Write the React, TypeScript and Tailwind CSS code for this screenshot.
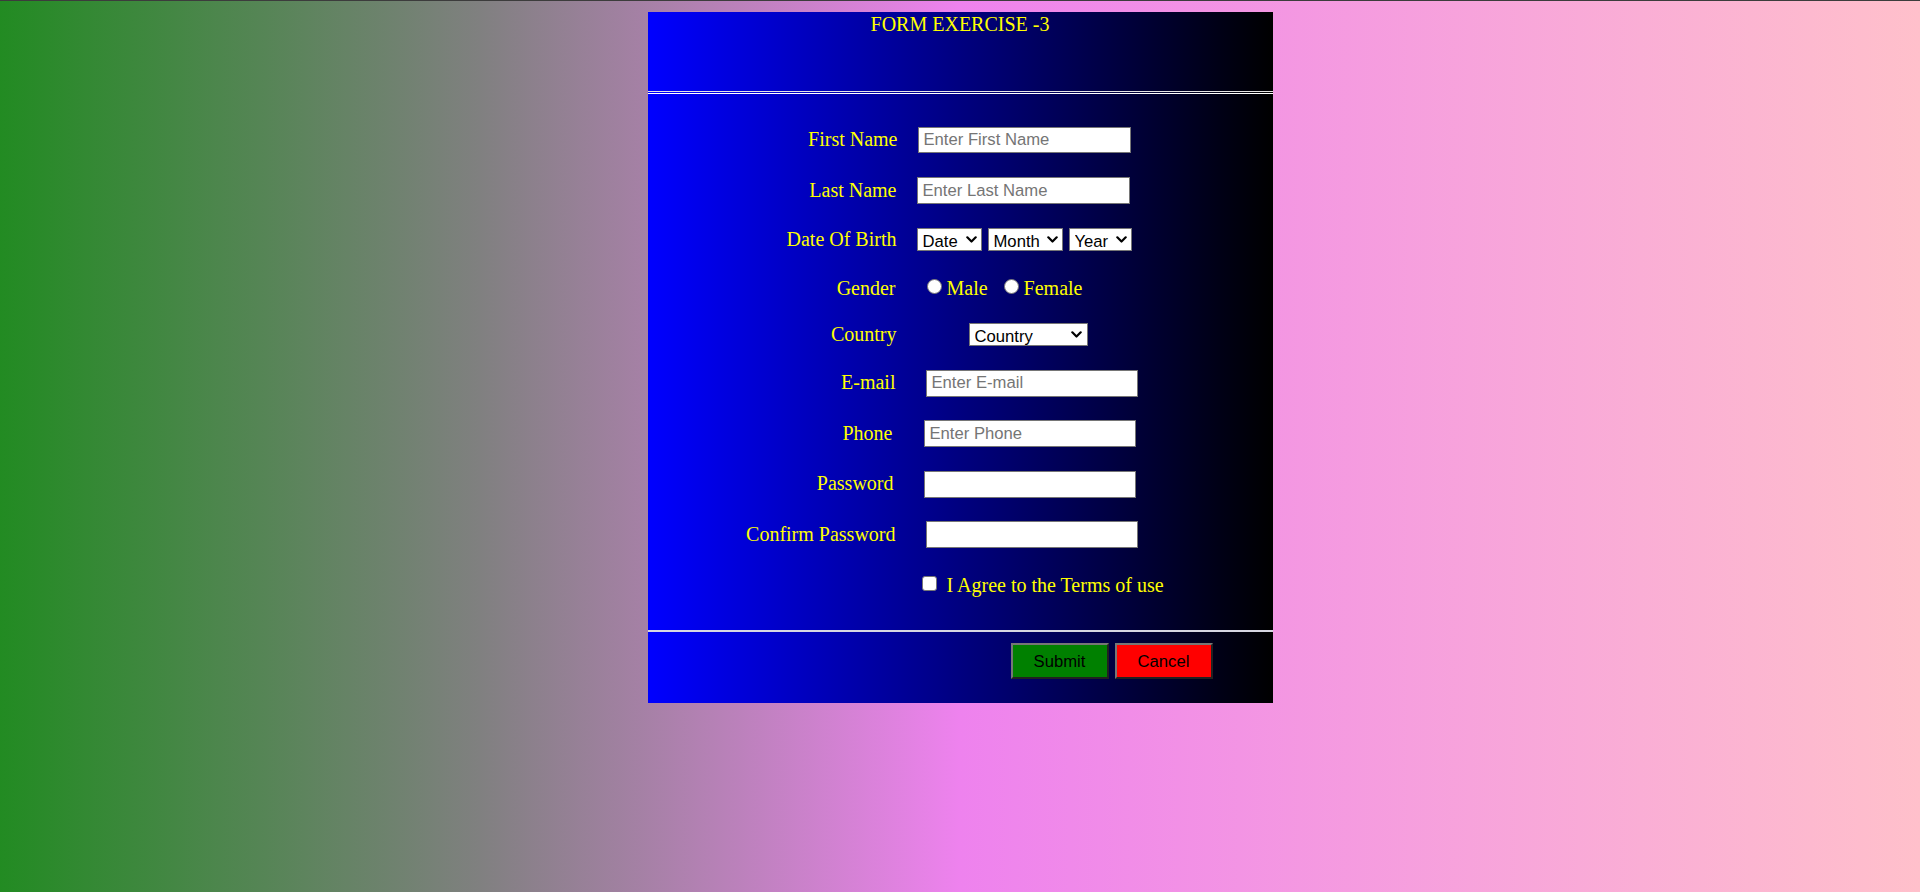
import React from "react";

const serif = "font-['Liberation_Serif','Times_New_Roman',serif]";

function Chevron({ className }: { className: string }) {
  return (
    <svg
      className={className}
      width="11"
      height="7"
      viewBox="0 0 11 7"
      fill="none"
      stroke="black"
      strokeWidth="2.2"
      strokeLinecap="round"
      strokeLinejoin="round"
    >
      <polyline points="1.3,1.3 5.5,5.5 9.7,1.3" />
    </svg>
  );
}

export default function App() {
  return (
    <div className="min-h-screen border-t border-[#3c3c3c] bg-[linear-gradient(to_right,forestgreen_0%,gray_25%,violet_50%,pink_100%)] pt-[11px]">
      <div className="mx-auto flex w-[625px] flex-col bg-[linear-gradient(to_right,#0000ff,#000000)]">
        {/* header */}
        <div className={`h-[79px] pt-[4px] text-center text-[20px] leading-[17px] text-[#ffff00] ${serif}`}>
          FORM EXERCISE -3
        </div>
        <div className="h-[3px] border-t border-b border-t-[#e4e4e4] border-b-[#ffffff]" />

        {/* body */}
        <form className={`flex h-[536px] flex-col pt-[21px] text-[20px] text-[#ffff00] ${serif}`}>
          <div className="flex h-[50px] items-center">
            <label className="w-[250px] shrink-0 pb-[2px] text-right">First Name</label>
            <input
              placeholder="Enter First Name"
              className="ml-[20px] h-[26px] w-[213px] border border-[#767676] bg-white px-[5px] font-['Liberation_Sans',Arial,sans-serif] text-[16.67px] text-black outline-none placeholder:text-[#757575]"
            />
          </div>
          <div className="flex h-[51px] items-center">
            <label className="w-[250px] shrink-0 pb-[2px] pr-[1px] text-right">Last Name</label>
            <input
              placeholder="Enter Last Name"
              className="ml-[19px] h-[27px] w-[213px] border border-[#767676] bg-white px-[5px] font-['Liberation_Sans',Arial,sans-serif] text-[16.67px] text-black outline-none placeholder:text-[#757575]"
            />
          </div>
          <div className="flex h-[47px] items-center">
            <label className="w-[250px] shrink-0 pb-[2px] pr-[1px] text-right">Date Of Birth</label>
            <div className="ml-[19px] flex gap-[6px] font-['Liberation_Sans',Arial,sans-serif] text-[16.67px] text-black">
              <div className="relative h-[23px] w-[65px]">
                <select className="h-full w-full appearance-none rounded-none border border-[#767676] bg-white pl-[5px] outline-none">
                  <option>Date</option>
                </select>
                <Chevron className="pointer-events-none absolute right-[5px] top-[8px]" />
              </div>
              <div className="relative h-[23px] w-[75px]">
                <select className="h-full w-full appearance-none rounded-none border border-[#767676] bg-white pl-[5px] outline-none">
                  <option>Month</option>
                </select>
                <Chevron className="pointer-events-none absolute right-[5px] top-[8px]" />
              </div>
              <div className="relative h-[23px] w-[63px]">
                <select className="h-full w-full appearance-none rounded-none border border-[#767676] bg-white pl-[5px] outline-none">
                  <option>Year</option>
                </select>
                <Chevron className="pointer-events-none absolute right-[5px] top-[8px]" />
              </div>
            </div>
          </div>
          <div className="flex h-[51px] items-center">
            <label className="w-[250px] shrink-0 pb-[2px] pr-[2px] text-right">Gender</label>
            <div className="ml-[29px] flex items-center">
              <input
                type="radio"
                name="g"
                className="mb-[4px] h-[15px] w-[15px] appearance-none rounded-full border border-[#767676] bg-white"
              />
              <span className="ml-[5px] pb-[2px]">Male</span>
              <input
                type="radio"
                name="g"
                className="mb-[4px] ml-[16px] h-[15px] w-[15px] appearance-none rounded-full border border-[#767676] bg-white"
              />
              <span className="ml-[5px] pb-[2px]">Female</span>
            </div>
          </div>
          <div className="flex h-[41px] items-center">
            <label className="w-[250px] shrink-0 pb-[2px] pr-[1px] text-right">Country</label>
            <div className="relative ml-[71px] h-[23px] w-[119px] font-['Liberation_Sans',Arial,sans-serif] text-[16.67px] text-black">
              <select className="h-full w-full appearance-none rounded-none border border-[#767676] bg-white pl-[5px] outline-none">
                <option>Country</option>
              </select>
              <Chevron className="pointer-events-none absolute right-[6px] top-[8px]" />
            </div>
          </div>
          <div className="flex h-[56px] items-center">
            <label className="w-[250px] shrink-0 pb-[2px] pr-[2px] text-right">E-mail</label>
            <input
              placeholder="Enter E-mail"
              className="ml-[28px] h-[27px] w-[212px] border border-[#767676] bg-white px-[5px] font-['Liberation_Sans',Arial,sans-serif] text-[16.67px] text-black outline-none placeholder:text-[#757575]"
            />
          </div>
          <div className="flex h-[45px] items-center">
            <label className="w-[250px] shrink-0 pb-[2px] pr-[5px] text-right">Phone</label>
            <input
              placeholder="Enter Phone"
              className="ml-[26px] h-[27px] w-[212px] border border-[#767676] bg-white px-[5px] font-['Liberation_Sans',Arial,sans-serif] text-[16.67px] text-black outline-none placeholder:text-[#757575]"
            />
          </div>
          <div className="flex h-[56px] items-center">
            <label className="w-[250px] shrink-0 pb-[2px] pr-[4px] text-right">Password</label>
            <input
              type="password"
              className="ml-[26px] h-[27px] w-[212px] border border-[#767676] bg-white px-[5px] font-['Liberation_Sans',Arial,sans-serif] text-[16.67px] text-black outline-none"
            />
          </div>
          <div className="flex h-[45px] items-center">
            <label className="w-[250px] shrink-0 pb-[2px] pr-[2px] text-right">Confirm Password</label>
            <input
              type="password"
              className="ml-[28px] h-[27px] w-[212px] border border-[#767676] bg-white px-[5px] font-['Liberation_Sans',Arial,sans-serif] text-[16.67px] text-black outline-none"
            />
          </div>
          <div className="flex h-[57px] items-center">
            <div className="w-[250px] shrink-0" />
            <input
              type="checkbox"
              className="mb-[4px] ml-[24px] h-[15px] w-[15px] appearance-none rounded-[3px] border border-[#767676] bg-white"
            />
            <span className="ml-[10px] pb-[2px]">I Agree to the Terms of use</span>
          </div>
        </form>
        <div className="h-[2px] bg-[#d6d6e2]" />

        {/* footer */}
        <div className="flex h-[71px] justify-end gap-[6px] pr-[60px] pt-[11px]">
          <button className="h-[36px] w-[98px] border-2 border-[#767676] bg-[#008000] font-['Liberation_Sans',Arial,sans-serif] text-[16.67px] text-black [border-style:outset]">
            Submit
          </button>
          <button className="h-[36px] w-[98px] border-2 border-[#767676] bg-[#ff0000] font-['Liberation_Sans',Arial,sans-serif] text-[16.67px] text-black [border-style:outset]">
            Cancel
          </button>
        </div>
      </div>
    </div>
  );
}
